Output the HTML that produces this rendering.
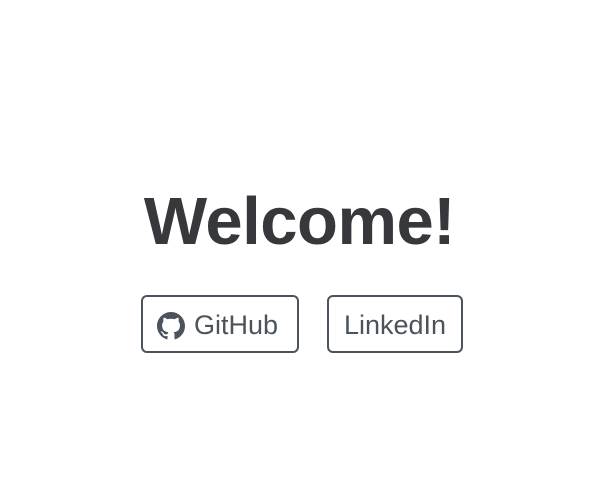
<!DOCTYPE html>
<html><head><style>
html,body{margin:0;padding:0;background:#fff;width:615px;height:484px;overflow:hidden;font-family:"Liberation Sans",sans-serif}
h1{position:absolute;left:-8px;width:615px;top:180px;margin:0;text-align:center;font-size:67px;font-weight:bold;color:#37383c;line-height:84px;letter-spacing:-0.5px}
.b{position:absolute;top:295px;height:54px;border:2px solid #4b535d;border-radius:6px;color:#4b535d;font-size:27px;line-height:56px;box-sizing:content-box}
svg{position:absolute;left:14px;top:15px}
</style></head><body>
<h1>Welcome!</h1>
<div class="b" style="left:141px;width:154px"><svg width="28" height="28" viewBox="0 0 16 16"><path fill="#4b535d" d="M8 0C3.58 0 0 3.58 0 8c0 3.54 2.29 6.53 5.47 7.59.4.07.55-.17.55-.38 0-.19-.01-.82-.01-1.49-2.01.37-2.530-.49-2.69-.94-.09-.23-.48-.94-.82-1.13-.28-.15-.68-.52-.01-.53.63-.01 1.08.58 1.23.82.72 1.21 1.87.87 2.33.66.07-.52.28-.87.51-1.07-1.78-.2-3.64-.89-3.64-3.95 0-.87.31-1.59.82-2.15-.08-.2-.36-1.02.08-2.12 0 0 .67-.21 2.2.82.64-.18 1.32-.27 2-.27.68 0 1.36.09 2 .27 1.53-1.04 2.2-.82 2.2-.82.44 1.1.16 1.92.08 2.12.51.56.82 1.27.82 2.15 0 3.07-1.87 3.75-3.65 3.95.29.25.54.73.54 1.48 0 1.07-.01 1.93-.01 2.2 0 .21.15.46.55.38A8.013 8.013 0 0016 8c0-4.42-3.58-8-8-8z"/></svg><span style="position:absolute;left:51px">GitHub</span></div>
<div class="b" style="left:327px;width:132px;text-align:center">LinkedIn</div>
</body></html>
